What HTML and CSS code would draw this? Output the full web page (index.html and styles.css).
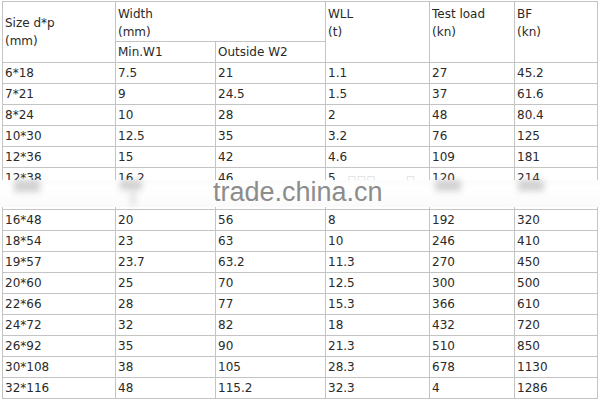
FILE: index.html
```html
<!DOCTYPE html>
<html>
<head>
<meta charset="utf-8">
<link rel="stylesheet" href="styles.css">
</head>
<body>
<div class="page">
<table class="spec">
  <colgroup>
    <col class="c1"><col class="c2"><col class="c3"><col class="c4"><col class="c5"><col class="c6">
  </colgroup>
  <thead>
    <tr class="h1">
      <th rowspan="2" class="mid">Size d*p<br>(mm)</th>
      <th colspan="2">Width<br>(mm)</th>
      <th rowspan="2">WLL<br>(t)</th>
      <th rowspan="2">Test load<br>(kn)</th>
      <th rowspan="2">BF<br>(kn)</th>
    </tr>
    <tr class="h2">
      <th class="mid">Min.W1</th>
      <th class="mid">Outside W2</th>
    </tr>
  </thead>
  <tbody>
    <tr><td>6*18</td><td>7.5</td><td>21</td><td>1.1</td><td>27</td><td>45.2</td></tr>
    <tr><td>7*21</td><td>9</td><td>24.5</td><td>1.5</td><td>37</td><td>61.6</td></tr>
    <tr><td>8*24</td><td>10</td><td>28</td><td>2</td><td>48</td><td>80.4</td></tr>
    <tr><td>10*30</td><td>12.5</td><td>35</td><td>3.2</td><td>76</td><td>125</td></tr>
    <tr><td>12*36</td><td>15</td><td>42</td><td>4.6</td><td>109</td><td>181</td></tr>
    <tr class="cut"><td>12*38</td><td>16.2</td><td>46</td><td>5 <span class="junk">□□□</span><span class="junk far">□</span></td><td>120</td><td>214</td></tr>
    <tr class="hidden-row"><td></td><td></td><td></td><td></td><td></td><td></td></tr>
    <tr><td>16*48</td><td>20</td><td>56</td><td>8</td><td>192</td><td>320</td></tr>
    <tr><td>18*54</td><td>23</td><td>63</td><td>10</td><td>246</td><td>410</td></tr>
    <tr><td>19*57</td><td>23.7</td><td>63.2</td><td>11.3</td><td>270</td><td>450</td></tr>
    <tr><td>20*60</td><td>25</td><td>70</td><td>12.5</td><td>300</td><td>500</td></tr>
    <tr><td>22*66</td><td>28</td><td>77</td><td>15.3</td><td>366</td><td>610</td></tr>
    <tr><td>24*72</td><td>32</td><td>82</td><td>18</td><td>432</td><td>720</td></tr>
    <tr><td>26*92</td><td>35</td><td>90</td><td>21.3</td><td>510</td><td>850</td></tr>
    <tr><td>30*108</td><td>38</td><td>105</td><td>28.3</td><td>678</td><td>1130</td></tr>
    <tr><td>32*116</td><td>48</td><td>115.2</td><td>32.3</td><td>4</td><td>1286</td></tr>
  </tbody>
</table>
<div class="watermark">
  <div class="smudge s1"></div>
  <div class="smudge s2"></div>
  <div class="smudge s3"></div>
  <div class="smudge s4"></div>
  <div class="smudge s5"></div>
  <span class="wm-text">trade.china.cn</span>
</div>
</div>
</body>
</html>
```

FILE: styles.css
```css
html, body {
  margin: 0;
  padding: 0;
  background: #ffffff;
}
.page {
  position: relative;
  width: 600px;
  height: 400px;
  overflow: hidden;
  padding: 1px 0 0 2px;
  box-sizing: border-box;
}
.spec {
  border-collapse: collapse;
  table-layout: fixed;
  width: 595px;
  font-family: "DejaVu Sans", Verdana, sans-serif;
  font-size: 12px;
  color: #2a2a2a;
}
.c1 { width: 113px; }
.c2 { width: 100px; }
.c3 { width: 110px; }
.c4 { width: 104px; }
.c5 { width: 85px; }
.c6 { width: 83px; }
.spec th, .spec td {
  border: 1px solid #c4c4c4;
  padding: 0 0 0 2px;
  text-align: left;
  font-weight: normal;
  white-space: nowrap;
  overflow: hidden;
}
.spec th {
  vertical-align: top;
  line-height: 18px;
  padding-top: 3px;
}
.spec th.mid {
  vertical-align: middle;
  padding-top: 0;
}
.h1 { height: 39px; }
.h2 { height: 21px; }
.spec tbody tr { height: 21px; }
.spec td {
  vertical-align: middle;
  line-height: 12px;
}
.junk {
  color: #d0d0d0;
  font-size: 9px;
  margin-left: 8px;
  letter-spacing: 1px;
}
.junk.far { margin-left: 30px; }
.watermark {
  position: absolute;
  left: 0;
  top: 180px;
  width: 600px;
  height: 27px;
  background: linear-gradient(to bottom, #fbfbfb 0%, #ffffff 30%, #fafafa 100%);
}
.smudge {
  position: absolute;
  background: #9a9a9a;
  filter: blur(3px);
  opacity: 0.45;
}
.s1 { left: 14px; top: 0; width: 26px; height: 12px; }
.s2 { left: 120px; top: 0; width: 22px; height: 10px; }
.s3 { left: 131px; top: 10px; width: 4px; height: 16px; opacity: 0.35; }
.s4 { left: 435px; top: 0; width: 26px; height: 11px; }
.s5 { left: 518px; top: 0; width: 26px; height: 11px; }
.wm-text {
  position: absolute;
  left: 213px;
  top: 4px;
  font-family: "Liberation Sans", Arial, sans-serif;
  font-size: 27px;
  line-height: 16px;
  color: #8c8c8c;
}
```
